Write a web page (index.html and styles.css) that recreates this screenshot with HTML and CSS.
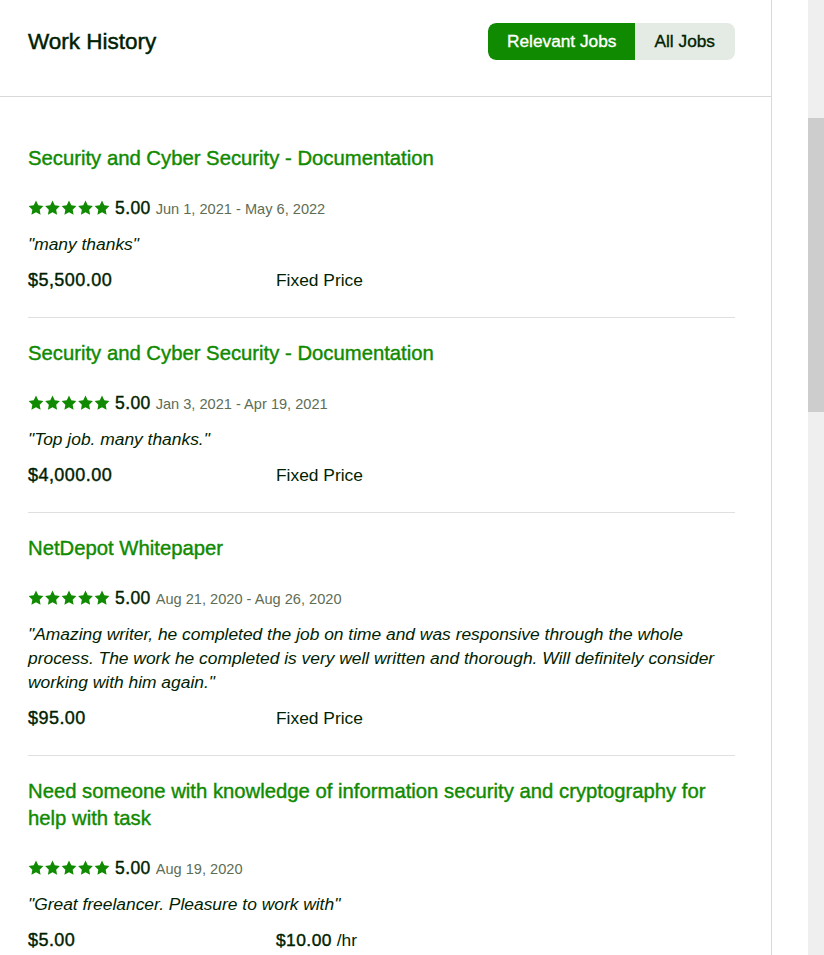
FILE: index.html
```html
<!DOCTYPE html>
<html lang="en">
<head>
<meta charset="utf-8">
<title>Work History</title>
<link rel="stylesheet" href="styles.css">
</head>
<body>
<div class="page">
  <section class="card">
    <header class="card-header">
      <h2 class="card-title">Work History</h2>
      <div class="toggle">
        <button class="toggle-btn is-active">Relevant Jobs</button>
        <button class="toggle-btn">All Jobs</button>
      </div>
    </header>
    <div class="job-list">
      <article class="job">
        <h3 class="job-title">Security and Cyber Security - Documentation</h3>
        <div class="rating">
          <svg class="stars" viewBox="0 0 82 16" width="82" height="16"><use href="#star5"/></svg>
          <span class="score">5.00</span>
          <span class="dates">Jun 1, 2021 - May 6, 2022</span>
        </div>
        <p class="quote">"many thanks"</p>
        <div class="price-row"><span class="amount">$5,500.00</span><span class="kind">Fixed Price</span></div>
      </article>
      <article class="job">
        <h3 class="job-title">Security and Cyber Security - Documentation</h3>
        <div class="rating">
          <svg class="stars" viewBox="0 0 82 16" width="82" height="16"><use href="#star5"/></svg>
          <span class="score">5.00</span>
          <span class="dates">Jan 3, 2021 - Apr 19, 2021</span>
        </div>
        <p class="quote">"Top job. many thanks."</p>
        <div class="price-row"><span class="amount">$4,000.00</span><span class="kind">Fixed Price</span></div>
      </article>
      <article class="job">
        <h3 class="job-title">NetDepot Whitepaper</h3>
        <div class="rating">
          <svg class="stars" viewBox="0 0 82 16" width="82" height="16"><use href="#star5"/></svg>
          <span class="score">5.00</span>
          <span class="dates">Aug 21, 2020 - Aug 26, 2020</span>
        </div>
        <p class="quote">"Amazing writer, he completed the job on time and was responsive through the whole process. The work he completed is very well written and thorough. Will definitely consider working with him again."</p>
        <div class="price-row"><span class="amount">$95.00</span><span class="kind">Fixed Price</span></div>
      </article>
      <article class="job">
        <h3 class="job-title">Need someone with knowledge of information security and cryptography for help with task</h3>
        <div class="rating">
          <svg class="stars" viewBox="0 0 82 16" width="82" height="16"><use href="#star5"/></svg>
          <span class="score">5.00</span>
          <span class="dates">Aug 19, 2020</span>
        </div>
        <p class="quote">"Great freelancer. Pleasure to work with"</p>
        <div class="price-row"><span class="amount">$5.00</span><span class="kind"><span class="amount">$10.00</span> /hr</span></div>
      </article>
    </div>
  </section>
  <div class="gutter"></div>
  <div class="scrollbar"><div class="thumb"></div></div>
</div>
<svg width="0" height="0" class="defs" aria-hidden="true">
  <defs>
    <path id="star" d="M8 0.6l2.25 4.75 5.15 0.7-3.75 3.6 0.93 5.15L8 12.3l-4.58 2.5 0.93-5.15L0.6 6.05l5.15-0.7z"/>
    <g id="star5" fill="#108a00">
      <use href="#star" x="0"/>
      <use href="#star" x="16.5"/>
      <use href="#star" x="33"/>
      <use href="#star" x="49.5"/>
      <use href="#star" x="66"/>
    </g>
  </defs>
</svg>
</body>
</html>
```

FILE: styles.css
```css
html, body {
  margin: 0;
  padding: 0;
  background: #ffffff;
}
body {
  font-family: "Liberation Sans", Arial, Helvetica, sans-serif;
  color: #001e00;
  overflow: hidden;
}
.defs {
  position: absolute;
  width: 0;
  height: 0;
}
.page {
  display: flex;
  height: 955px;
}
.card {
  width: 771px;
  border-right: 1px solid #d9d9d9;
  flex: none;
}
.gutter {
  width: 36px;
  flex: none;
}
.scrollbar {
  width: 16px;
  flex: none;
  background: #efefef;
  padding-top: 118px;
  box-sizing: border-box;
}
.thumb {
  height: 294px;
  background: #cdcdcd;
}
.card-header {
  height: 97px;
  box-sizing: border-box;
  border-bottom: 1px solid #d9d9d9;
  display: flex;
  align-items: flex-start;
  justify-content: space-between;
  padding: 23px 36px 0 28px;
}
.card-title {
  margin: 0;
  font-size: 22.5px;
  font-weight: 400;
  -webkit-text-stroke: 0.45px #001e00;
  line-height: 37px;
  color: #001e00;
}
.toggle {
  display: flex;
  height: 37px;
  border-radius: 8px;
  overflow: hidden;
  background: #e4ebe4;
}
.toggle-btn {
  border: 0;
  margin: 0;
  font-family: inherit;
  font-size: 17.3px;
  font-weight: 400;
  -webkit-text-stroke: 0.35px #001e00;
  color: #001e00;
  background: transparent;
  padding: 0 20px 0 19px;
  line-height: 37px;
}
.toggle-btn.is-active {
  background: #108a00;
  color: #ffffff;
  -webkit-text-stroke: 0.35px #ffffff;
  padding: 0 19px;
  border-radius: 8px 0 0 8px;
}
.job-list {
  padding: 26px 36px 0 28px;
}
.job {
  padding: 22px 0 25px;
  border-bottom: 1px solid #e0e0e0;
}
.job-title {
  margin: 0;
  font-size: 20.3px;
  line-height: 27px;
  font-weight: 400;
  -webkit-text-stroke: 0.4px #108a00;
  color: #108a00;
}
.rating {
  margin-top: 24px;
  display: flex;
  align-items: center;
  height: 24px;
}
.stars {
  display: block;
  margin-right: 5px;
  margin-top: -1px;
}
.score {
  font-size: 17.5px;
  letter-spacing: 0.4px;
  font-weight: 400;
  -webkit-text-stroke: 0.4px #001e00;
  margin-right: 5px;
}
.dates {
  font-size: 14.6px;
  color: #5e6d55;
  padding-top: 2px;
}
.quote {
  margin: 12px 0 0;
  font-size: 17.4px;
  line-height: 24px;
  font-style: italic;
  color: #001e00;
}
.price-row {
  margin-top: 12px;
  display: grid;
  grid-template-columns: 248px 1fr;
  font-size: 17.4px;
  line-height: 24px;
}
.amount {
  font-size: 18px;
  letter-spacing: 0.45px;
  -webkit-text-stroke: 0.4px #001e00;
}
.kind {
  font-weight: 400;
}
.kind .amount {
  font-size: 17.4px;
}
```
